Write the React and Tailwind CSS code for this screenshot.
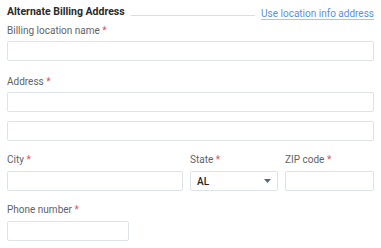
import React from 'react';

const Label = ({ children, className = '' }) => (
    <div className={`text-[10px] leading-[12px] text-[#5f6368] whitespace-nowrap ${className}`}>
        {children} <span className="text-[#e05260]">*</span>
    </div>
);

const Input = ({ className = '' }) => (
    <div className={`h-[20px] border border-[#dde3e9] rounded-[2px] bg-white ${className}`} />
);

const App = () => {
    return (
        <div className="w-[381px] h-[248px] bg-white px-[7px] font-['Roboto',sans-serif] overflow-hidden">
            {/* Header */}
            <div className="flex items-center h-[14px] mt-[5px]">
                <div className="text-[10.5px] font-bold text-[#2a2a2a] whitespace-nowrap">Alternate Billing Address</div>
                <div className="flex-1 h-px bg-[#d9dee4] mx-[6px] mt-[6px]" />
                <a className="text-[10px] text-[#5b8fe0] underline decoration-[#a9c3ef] underline-offset-2 whitespace-nowrap mt-[2px]">Use location info address</a>
            </div>

            <Label className="mt-[6px]">Billing location name</Label>
            <Input className="mt-[4px]" />

            <Label className="mt-[15px]">Address</Label>
            <Input className="mt-[4px]" />
            <Input className="mt-[9px]" />

            <div className="flex gap-[7px] mt-[13px]">
                <div className="w-[176px]">
                    <Label>City</Label>
                    <Input className="mt-[5px]" />
                </div>
                <div className="w-[88px]">
                    <Label>State</Label>
                    <div className="mt-[5px] h-[20px] border border-[#dde3e9] rounded-[2px] flex items-center justify-between px-[6px]">
                        <span className="text-[10px] font-medium text-[#222]">AL</span>
                        <svg width="7" height="4" viewBox="0 0 7 4"><path d="M0 0h7L3.5 4z" fill="#4d6b86" /></svg>
                    </div>
                </div>
                <div className="flex-1">
                    <Label>ZIP code</Label>
                    <Input className="mt-[5px]" />
                </div>
            </div>

            <Label className="mt-[13px]">Phone number</Label>
            <Input className="mt-[5px] w-[122px]" />
        </div>
    );
};

export default App;
